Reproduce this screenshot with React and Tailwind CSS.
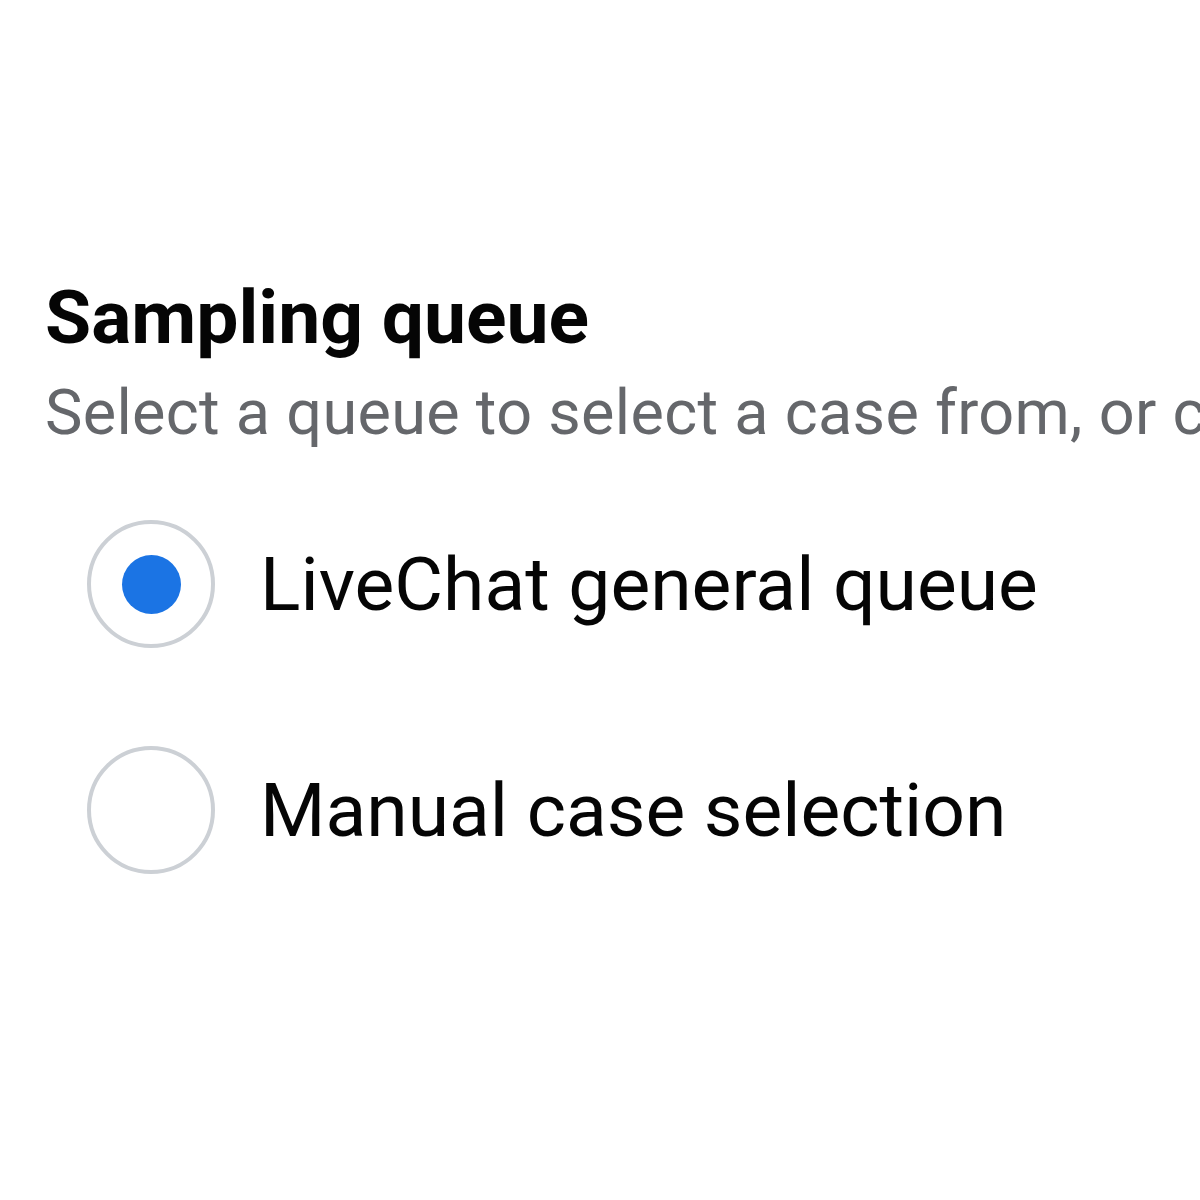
import { useState } from "react";

const options = [
  { id: "livechat", label: "LiveChat general queue" },
  { id: "manual", label: "Manual case selection" },
];

const App = () => {
  const [selected, setSelected] = useState("livechat");

  return (
    <div
      className="w-[1200px] h-[1200px] overflow-hidden bg-white pl-[45px] pt-[279px]"
      style={{ fontFamily: "Roboto, 'Liberation Sans', sans-serif" }}
    >
      {/* header */}
      <h1 className="text-[75px] leading-[76px] font-bold text-[#050505] whitespace-nowrap">
        Sampling queue
      </h1>
      <p className="mt-[26px] text-[63px] leading-[64px] tracking-[0.3px] text-[#65676b] whitespace-nowrap">
        Select a queue to select a case from, or choose a case manually.
      </p>

      {/* radio list */}
      <div className="mt-[75px] flex flex-col gap-[98px] pl-[42px]">
        {options.map((opt) => (
          <label
            key={opt.id}
            onClick={() => setSelected(opt.id)}
            className="flex items-center gap-[45px] cursor-pointer"
          >
            <span className="w-[128px] h-[128px] shrink-0 rounded-full border-[4px] border-[#ccd0d5] flex items-center justify-center">
              {selected === opt.id && (
                <span className="w-[59px] h-[59px] rounded-full bg-[#1b74e4]" />
              )}
            </span>
            <span className="text-[75px] leading-[75px] text-[#050505] whitespace-nowrap">
              {opt.label}
            </span>
          </label>
        ))}
      </div>
    </div>
  );
};

export default App;
